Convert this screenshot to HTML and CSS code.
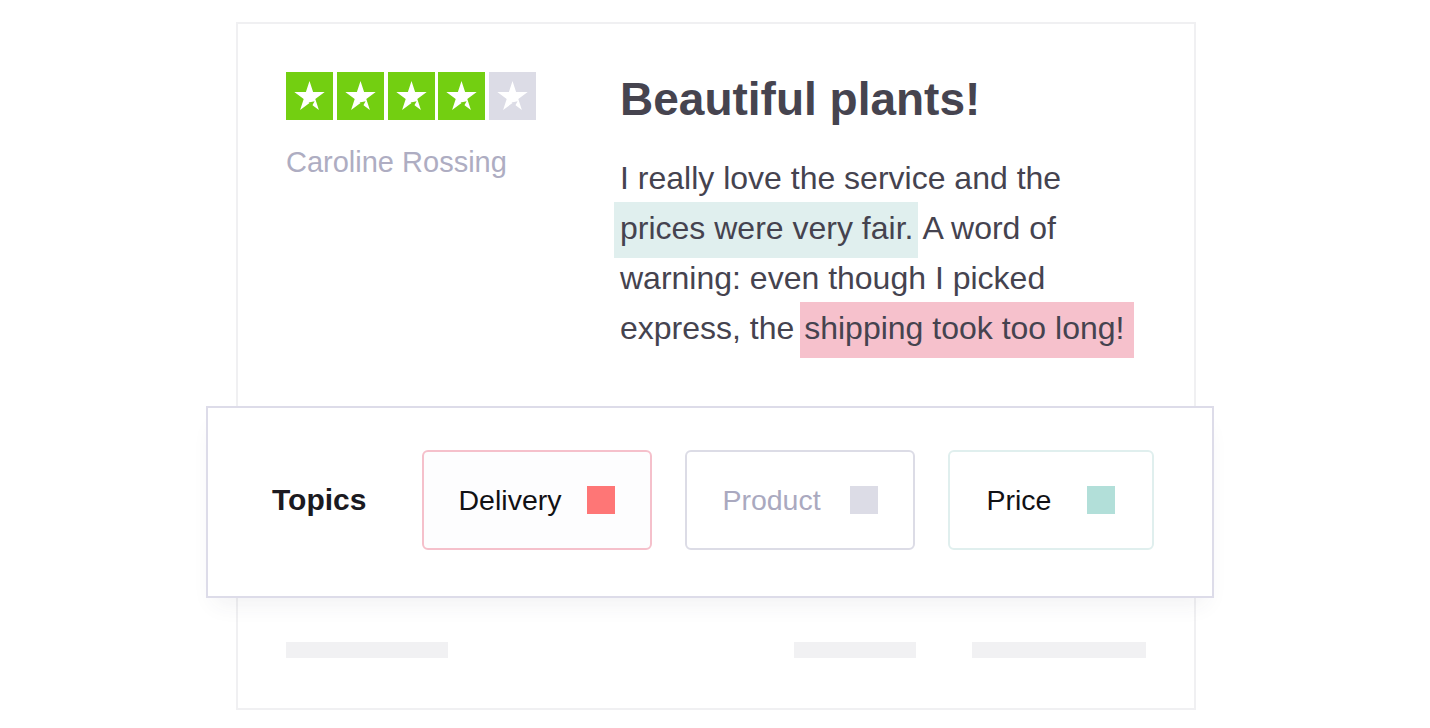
FILE: index.html
```html
<!DOCTYPE html>
<html lang="en">
<head>
<meta charset="utf-8">
<title>Review</title>
<link rel="stylesheet" href="styles.css">
</head>
<body>
<div class="card">
  <div class="review">
    <div class="author">
      <div class="stars">
        <span class="star on"><svg viewBox="0 0 47 48"><polygon class="s" points="23.5,9 27.1,20.1 38.7,20.1 29.3,26.9 32.9,37.9 23.5,31.1 14.1,37.9 17.7,26.9 8.3,20.1 19.9,20.1"/><polygon class="cut" points="22.6,30.6 28.6,29.2 26,34"/></svg></span>
        <span class="star on"><svg viewBox="0 0 47 48"><polygon class="s" points="23.5,9 27.1,20.1 38.7,20.1 29.3,26.9 32.9,37.9 23.5,31.1 14.1,37.9 17.7,26.9 8.3,20.1 19.9,20.1"/><polygon class="cut" points="22.6,30.6 28.6,29.2 26,34"/></svg></span>
        <span class="star on"><svg viewBox="0 0 47 48"><polygon class="s" points="23.5,9 27.1,20.1 38.7,20.1 29.3,26.9 32.9,37.9 23.5,31.1 14.1,37.9 17.7,26.9 8.3,20.1 19.9,20.1"/><polygon class="cut" points="22.6,30.6 28.6,29.2 26,34"/></svg></span>
        <span class="star on"><svg viewBox="0 0 47 48"><polygon class="s" points="23.5,9 27.1,20.1 38.7,20.1 29.3,26.9 32.9,37.9 23.5,31.1 14.1,37.9 17.7,26.9 8.3,20.1 19.9,20.1"/><polygon class="cut" points="22.6,30.6 28.6,29.2 26,34"/></svg></span>
        <span class="star off"><svg viewBox="0 0 47 48"><polygon class="s" points="23.5,9 27.1,20.1 38.7,20.1 29.3,26.9 32.9,37.9 23.5,31.1 14.1,37.9 17.7,26.9 8.3,20.1 19.9,20.1"/><polygon class="cut" points="22.6,30.6 28.6,29.2 26,34"/></svg></span>
      </div>
      <div class="name">Caroline Rossing</div>
    </div>
    <div class="content">
      <h1 class="title">Beautiful plants!</h1>
      <p class="text">I really love the service and the <span class="hl hl-price">prices were very fair.</span> A word of warning: even though I picked express, the <span class="hl hl-delivery">shipping took too long!</span></p>
    </div>
  </div>

  <div class="topics">
    <div class="topics-label">Topics</div>
    <div class="chip chip-delivery"><span class="chip-text">Delivery</span><span class="swatch"></span></div>
    <div class="chip chip-product"><span class="chip-text">Product</span><span class="swatch"></span></div>
    <div class="chip chip-price"><span class="chip-text">Price</span><span class="swatch"></span></div>
  </div>

  <div class="placeholders">
    <span class="bar bar-a"></span>
    <div class="bar-group">
      <span class="bar bar-b"></span>
      <span class="bar bar-c"></span>
    </div>
  </div>
</div>
</body>
</html>
```

FILE: styles.css
```css
* { box-sizing: border-box; }

html, body {
  margin: 0;
  padding: 0;
  background: #ffffff;
}

body {
  font-family: "Liberation Sans", Arial, sans-serif;
  padding-top: 22px;
}

.card {
  width: 960px;
  margin-left: 236px;
  border: 2px solid #f0f0f2;
  background: #ffffff;
  padding: 48px 48px 50px 48px;
}

.review {
  display: flex;
  align-items: flex-start;
}

.author {
  width: 334px;
  flex: none;
}

.stars {
  display: flex;
  gap: 3.75px;
}

.star {
  width: 47px;
  height: 48px;
  display: block;
}

.star svg {
  display: block;
  width: 47px;
  height: 48px;
}

.star.on svg { background: #73cf11; }
.star.off svg { background: #dcdce6; }
.star .s { fill: #ffffff; }
.star.on .cut { fill: #73cf11; }
.star.off .cut { fill: #dcdce6; }

.name {
  margin-top: 24px;
  font-size: 29px;
  line-height: 36px;
  color: #aeadc2;
}

.content {
  flex: 1;
  min-width: 0;
}

.title {
  margin: 0;
  font-size: 46px;
  line-height: 54px;
  font-weight: 700;
  color: #46444f;
}

.text {
  margin: 27px 0 0 0;
  font-size: 32px;
  line-height: 50px;
  color: #45434f;
  max-width: 526px;
}

.hl-price {
  background: #e0efee;
  box-shadow: 0 -8px 0 #e0efee, 0 12px 0 #e0efee;
  margin-left: -6px;
  padding: 0 5px 0 6px;
  margin-right: -3px;
}

.hl-delivery {
  background: #f6c1cc;
  box-shadow: 0 -8px 0 #f6c1cc, 0 12px 0 #f6c1cc;
  margin-left: -3px;
  padding: 0 10px 0 4px;
}

.topics {
  margin: 53px -68px 0 -80px;
  height: 192px;
  border: 2px solid #dddce9;
  background: #ffffff;
  box-shadow: 0 14px 22px -8px rgba(60, 60, 90, 0.07);
  display: flex;
  align-items: center;
  gap: 33px;
  padding: 0 0 4px 64px;
}

.topics-label {
  width: 117px;
  font-size: 30px;
  font-weight: 700;
  color: #1b1a21;
}

.chip {
  height: 100px;
  width: 230px;
  border: 2px solid #dcdce6;
  border-radius: 6px;
  background: #fdfdfe;
  display: flex;
  align-items: center;
  justify-content: center;
  gap: 26px;
  font-size: 28.5px;
  color: #111114;
}

.swatch {
  width: 28px;
  height: 28px;
  flex: none;
}

.chip-delivery { border-color: #f5c0cb; }
.chip-delivery .swatch { background: #fe7676; }

.chip-product { border-color: #dcdce6; background: #ffffff; gap: 29px; }
.chip-product .chip-text { color: #aaa9bf; }
.chip-product .swatch { background: #dcdce6; }

.chip-price { width: 206px; border-color: #e0efee; background: #ffffff; gap: 36px; }
.chip-price .swatch { background: #b2dfd9; }

.placeholders {
  margin-top: 44px;
  display: flex;
  justify-content: space-between;
}

.bar-group {
  display: flex;
  gap: 56px;
}

.bar {
  display: block;
  height: 16px;
  background: #f1f1f3;
}

.bar-a { width: 162px; }
.bar-b { width: 122px; }
.bar-c { width: 174px; }
```
